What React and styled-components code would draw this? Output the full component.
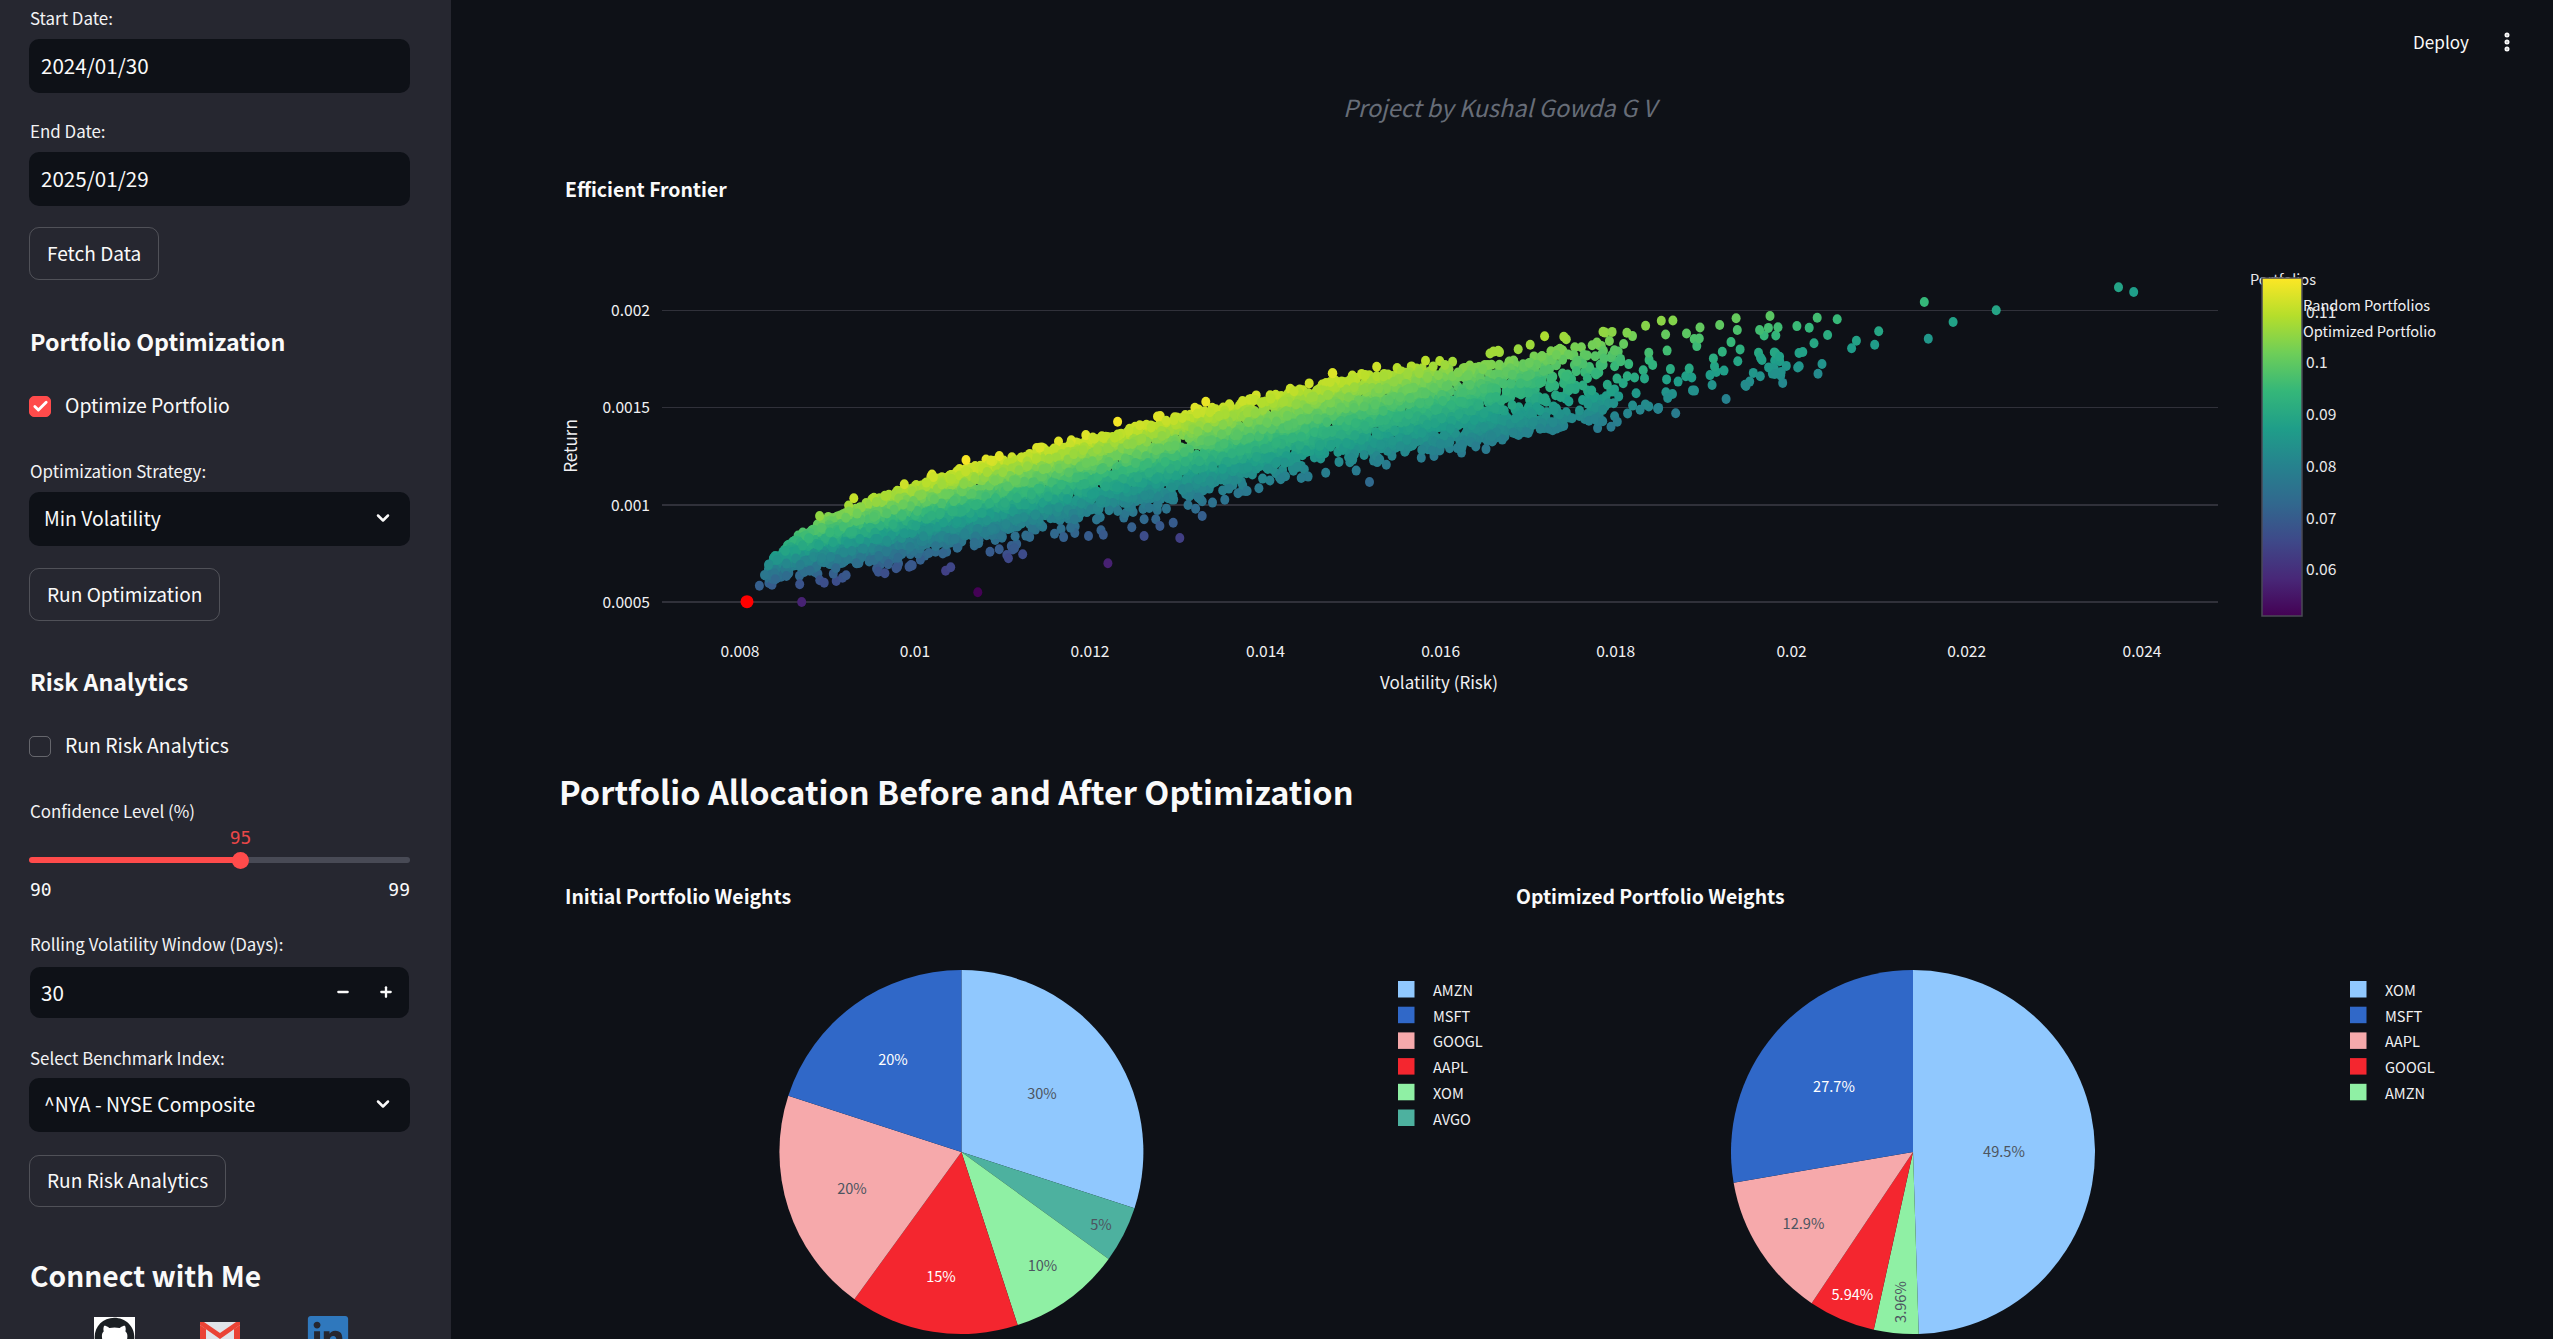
import React, { useMemo } from "react";
import styled, { createGlobalStyle } from "styled-components";
import { ChevronDown, Minus, Plus, Check, EllipsisVertical } from "lucide-react";
import { FaGithub, FaLinkedin } from "react-icons/fa";

const FONT = `"Noto Sans CJK SC", "Noto Sans", sans-serif`;

const Global = createGlobalStyle`
  html, body { margin: 0; height: 100%; overflow: hidden; background: #0e1117; }
  #root { height: 100%; }
  * { box-sizing: border-box; }
`;

const Shell = styled.div`
  display: flex; width: 100%; height: 1339px; overflow: hidden; background: #0e1117;
  color: #fafafa; font-family: ${FONT}; position: relative;
`;
const Sidebar = styled.aside`
  flex: 0 0 451px; height: 100%; overflow: hidden; background: #262730;
  padding: 6px 41px 0 29px; display: flex; flex-direction: column;
`;
const Label = styled.div`
  height: 24px; line-height: 23px; font-size: 16.9px; margin-top: ${p => p.$mt || 0}px; flex: none;
  padding-left: 1px; color: #f3f3f5; white-space: nowrap;
`;
const Field = styled.div`
  height: ${p => p.$h || 54}px; margin-top: ${p => p.$mt ?? 9}px; background: #0e1117; border-radius: 10px;
  display: flex; align-items: center; font-size: 19.4px; line-height: 26px; padding-bottom: 2px; color: #fafafa;
  padding-left: ${p => p.$pl || 12}px; padding-right: ${p => p.$pr || 12}px; justify-content: space-between; flex: none;
`;
const DateValue = styled.span`
  font-size: 20.6px;
`;
const NumberField = styled(Field).attrs({ $h: 51, $mt: 11 })`
  margin-left: 1px; margin-right: 1px; padding-left: 11px; padding-right: 14px;
`;
const ActionButton = styled.div`
  align-self: flex-start; height: ${p => p.$h || 53}px; margin-top: ${p => p.$mt || 21}px; padding: 0 17px 2px;
  border: 1px solid rgba(250,250,250,.2); border-radius: 10px; display: flex; align-items: center;
  font-size: 19.1px; color: #fafafa; white-space: nowrap; flex: none;
`;
const SideHeading = styled.h3`
  margin: ${p => p.$mt}px 0 0; padding-left: 1px; height: 40px; line-height: 39px; flex: none;
  font-size: ${p => p.$size}px; font-weight: 700; color: #fafafa; white-space: nowrap;
`;
const CheckRow = styled.div`
  display: flex; align-items: center; gap: 14px; height: 22px; line-height: 22px; margin-top: 33px; font-size: 19.4px; flex: none;
`;
const CheckLabel = styled.span`
  margin-bottom: 3px;
`;
const CheckBoxMark = styled.span`
  width: 22px; height: 21px; border-radius: 5px; display: flex; align-items: center; justify-content: center; flex: none;
  background: ${p => (p.$on ? "#ff4b4b" : "transparent")};
  border: 1px solid ${p => (p.$on ? "#ff4b4b" : "rgba(250,250,250,.3)")};
`;
const SliderBox = styled.div`
  position: relative; height: 82px; flex: none;
`;
const Track = styled.div`
  position: absolute; left: 0; right: 0; top: 34px; height: 6px; border-radius: 3px;
  background: linear-gradient(to right, #ff4b4b 0 56%, #484a55 56% 100%);
`;
const Thumb = styled.div`
  position: absolute; left: 203px; top: 29px; width: 17px; height: 17px; border-radius: 50%; background: #ff4b4b;
`;
const SliderValue = styled.div`
  position: absolute; left: 200px; top: 4px; width: 23px; text-align: center;
  font: 18px/22px "DejaVu Sans Mono", monospace; color: #ff4b4b; opacity: .9;
`;
const SliderEnds = styled.div`
  position: absolute; left: 1px; right: 0; top: 56px; display: flex; justify-content: space-between;
  font: 18px/22px "DejaVu Sans Mono", monospace; color: #fafafa;
`;
const Steppers = styled.span`
  display: flex; align-items: center; gap: 27px; margin-right: 1px;
`;
const SocialRow = styled.div`
  position: relative; flex: none; height: 60px; margin-top: 22px;
`;
const SocialIcon = styled.a`
  position: absolute; left: ${p => p.$x}px; top: ${p => p.$y}px; width: ${p => p.$w}px; height: 41px; display: block;
  background: ${p => p.$bg || "transparent"}; line-height: 0;
`;

const Main = styled.main`
  flex: 1; min-width: 0; height: 100%; overflow: hidden; position: relative; padding: 0 0 0 108px;
  display: flex; flex-direction: column;
`;
const TopBar = styled.div`
  position: absolute; top: 28px; right: 34px; display: flex; align-items: center; gap: 26px;
  font-size: 17.1px; line-height: 28px; color: #fafafa;
`;
const Subtitle = styled.div`
  height: 40px; margin-top: 87px; width: 1881px; text-align: center; flex: none;
  font-size: 23.6px; line-height: 40px; font-style: italic; color: #676d78;
`;
const ChartTitle = styled.div`
  font-size: 19.4px; font-weight: 700; color: #fafafa; height: 30px; line-height: 28px; padding-left: 6px; flex: none;
`;
const FrontierTitle = styled(ChartTitle)`
  margin-top: 48px;
`;
const ChartSvg = styled.svg`
  display: block; flex: none; font-family: ${FONT};
`;
const FrontierSvg = styled(ChartSvg)`
  margin-top: 25px;
`;
const BigHeading = styled.h2`
  margin: 58px 0 0; height: 50px; line-height: 46px; font-size: 32.5px; font-weight: 700; color: #fafafa; flex: none;
`;
const Columns = styled.div`
  display: flex; margin-top: 64px; flex: none;
`;
const Column = styled.div`
  flex: 0 0 ${p => p.$w}px; display: flex; flex-direction: column;
`;
const PieSvg = styled(ChartSvg)`
  margin-top: 28px;
`;

const VIRIDIS = ["#440154","#482878","#3e4989","#31688e","#26828e","#1f9e89","#35b779","#6ece58","#b5de2b","#fde725"];
const hex = h => [1,3,5].map(i => parseInt(h.slice(i,i+2),16));
function viridis(t) {
  const c = Math.max(0, Math.min(0.9999, t)) * (VIRIDIS.length - 1);
  const i = Math.floor(c), f = c - i, a = hex(VIRIDIS[i]), b = hex(VIRIDIS[i+1]);
  return `rgb(${a.map((v,k) => Math.round(v + (b[k]-v)*f)).join(",")})`;
}
const interp = (pts, x) => {
  if (x <= pts[0][0]) return pts[0][1];
  for (let i = 1; i < pts.length; i++) if (x <= pts[i][0]) {
    const [x0,y0] = pts[i-1], [x1,y1] = pts[i];
    return y0 + (y1-y0)*(x-x0)/(x1-x0);
  }
  return pts[pts.length-1][1];
};
const TOP = [[757,590],[764,570],[775,558],[790,544],[820,525],[854,509],[887,495],[963,470],[1040,452],[1116,432],[1203,411],[1331,383],[1424,368],[1496,356],[1564,342],[1660,324],[1772,319],[1923,306],[2123,291]];
const BOT = [[757,592],[775,578],[795,566],[846,562],[897,556],[999,533],[1101,509],[1203,489],[1336,449],[1380,453],[1500,426],[1620,403],[1780,369],[1940,333],[2123,300]];

const xToVol = x => 0.008 + (x-740)/87600;
const yToRet = y => 0.0005 + (602-y)/194600;
const dotColor = (x,y) => viridis((yToRet(y)/xToVol(x) - 0.0512)/(0.1168-0.0512));

function mulberry(a){ return () => { a |= 0; a = a + 0x6D2B79F5 | 0; let t = Math.imul(a ^ a >>> 15, 1 | a); t = t + Math.imul(t ^ t >>> 7, 61 | t) ^ t; return ((t ^ t >>> 14) >>> 0) / 4294967296; }; }

const Z3 = [[513,1086],[858,1057],[1113,970],[1075,888],[1104,884],[1160,862],[1184,888],[1254,894],[882,935],[900,928],[915,945],[918,955],[930,925],[946,943],[795,992],[805,982],[663,995],[676,1000],[698,985],[727,975],[557,1028],[600,1006],[509,1033],[529,992],[430,1037],[1298,828],[1270,795],[1285,806],[1368,760],[1386,753],[1409,745],[1452,718],[1492,714],[1540,698],[1184,838],[1207,838],[1241,848],[1215,858],[615,775],[548,828],[1305,485],[1553,400],[835,660],[1132,545],[440,1005],[448,975],[465,960],[461,1018],[483,1008],[510,975],[580,985],[620,970]];
const Z4 = [[1024,142],[1043,156],[781,186],[871,211],[817,246],[786,296],[724,274],[696,302],[690,325],[719,314],[672,238],[647,233],[637,263],[660,285],[643,310],[629,336],[653,372],[648,401],[588,228],[598,262],[575,270],[452,242],[379,275],[409,278],[306,289],[533,477],[558,438],[470,520],[448,507],[397,545],[389,560],[87,726],[466,462],[460,474],[594,402],[600,350],[578,360],[525,255],[547,270],[330,290],[288,314],[273,328],[248,332],[41,400],[96,380],[157,362]];

function accept(x) {
  if (x < 800) return 0.25 + 0.75*(x-768)/32;
  if (x < 1430) return 1;
  if (x < 1640) return 1 - 0.93*(x-1430)/210;
  if (x < 1800) return 0.05;
  return 0;
}

function makeDots() {
  const r = mulberry(20250129), out = [];
  for (let i = 0; i < 7600; i++) {
    const x = 768 + 1080*Math.pow(r(), 1.15);
    if (r() > accept(x)) continue;
    const b = interp(BOT,x), tp = interp(TOP,x);
    let y = b + (tp-b)*Math.pow(r(), 0.9);
    const roll = r();
    if (roll < 0.04) y = b + Math.min(20, -Math.log(r()+0.01)*6);
    else if (roll < 0.055) y = tp - r()*5;
    else if (x > 1430) y = b + 14 + (tp-b-8)*r();
    out.push([x, y + (r()-.5)*3]);
  }
  Z3.forEach(([a,c]) => out.push([540+a/1.96, 240+c/3]));
  Z4.forEach(([a,c]) => out.push([1300+a/1.251, 240+c/3]));
  return out;
}

const PALETTE = { blue:"#90c8fe", navy:"#3068c8", pink:"#f6a9ab", red:"#f4262f", green:"#8ff0a4", teal:"#4db19f" };

const slicePath = (cx, cy, r, a0, a1) => {
  const p = a => [cx + r*Math.sin(a*2*Math.PI), cy - r*Math.cos(a*2*Math.PI)];
  const [x0,y0] = p(a0), [x1,y1] = p(a1);
  return `M${cx} ${cy}L${x0} ${y0}A${r} ${r} 0 ${a1-a0>0.5?1:0} 1 ${x1} ${y1}Z`;
};

function Frontier() {
  const dots = useMemo(makeDots, []);
  const gridY = [[310.5,1],[407.5,1],[505,2],[602,2]];
  const yTicks = [["0.002",310],["0.0015",407],["0.001",505],["0.0005",602]];
  const xTicks = [["0.008",740],["0.01",915],["0.012",1090],["0.014",1265.5],["0.016",1440.7],["0.018",1615.7],["0.02",1791.6],["0.022",1966.7],["0.024",2142]];
  const barTicks = [["0.11",312.7],["0.1",363],["0.09",414.7],["0.08",467],["0.07",519],["0.06",570]];
  return (
    <FrontierSvg width={1900} height={480} viewBox="559 230 1900 480">
      <defs>
        <linearGradient id="vir" x1="0" y1="1" x2="0" y2="0">
          {VIRIDIS.map((c,i) => <stop key={c} offset={i/9} stopColor={c} />)}
        </linearGradient>
      </defs>
      {gridY.map(([y,w]) => <line key={y} x1={662} x2={2218} y1={y} y2={y} stroke="#30313a" strokeWidth={w} />)}
      {yTicks.map(([t,y]) => <text key={t} x={650} y={y+6} textAnchor="end" fontSize={15.6} fill="#f0f0f2">{t}</text>)}
      {xTicks.map(([t,x]) => <text key={t} x={x} y={657} textAnchor="middle" fontSize={15.6} fill="#f0f0f2">{t}</text>)}
      <text x={1439} y={689} textAnchor="middle" fontSize={17} fill="#f0f0f2">Volatility (Risk)</text>
      <text transform="translate(577 446) rotate(-90)" textAnchor="middle" fontSize={17} fill="#f0f0f2">Return</text>
      {dots.map(([x,y],i) => <ellipse key={i} cx={x.toFixed(1)} cy={y.toFixed(1)} rx={4.5} ry={5} fill={dotColor(x,y)} />)}
      <circle cx={747} cy={601.7} r={6.5} fill="#ff0000" />
      <text x={2283} y={285} textAnchor="middle" fontSize={14.6} fill="#e8e8ea">Portfolios</text>
      <rect x={2262} y={278} width={40} height={338} fill="url(#vir)" stroke="#4a4a55" strokeWidth={1.5} />
      {barTicks.map(([t,y]) => <text key={t} x={2306} y={y+5} fontSize={15.6} fill="#e8e8ea">{t}</text>)}
      <text x={2303} y={311} fontSize={14.6} fill="#f0f0f2">Random Portfolios</text>
      <text x={2303} y={337} fontSize={14.6} fill="#f0f0f2">Optimized Portfolio</text>
    </FrontierSvg>
  );
}

function Pie({ originX, width, cx, legendX, slices, legend }) {
  let acc = 0;
  return (
    <PieSvg width={width} height={410} viewBox={`${originX} 940 ${width} 410`}>
      {slices.map(s => { const a = acc; acc += s.v; return <path key={s.c} d={slicePath(cx,1152,182,a,acc)} fill={s.c} />; })}
      {slices.map(s => (
        <text key={s.c} x={s.x} y={s.rot ? s.y : s.y-1.5} textAnchor="middle" dominantBaseline="central" fontSize={14.6} fill={s.w ? "#ffffff" : "#4d5560"}
          transform={s.rot ? `rotate(${s.rot} ${s.x} ${s.y})` : undefined}>{s.t}</text>
      ))}
      {legend.map(([n,c],i) => (
        <g key={n}>
          <rect x={legendX} y={981+i*25.7} width={16.5} height={16.5} fill={c} />
          <text x={legendX+35} y={996+i*25.7} fontSize={14.6} fill="#f0f0f2">{n}</text>
        </g>
      ))}
    </PieSvg>
  );
}

const GmailMark = () => (
  <svg width="40" height="30" viewBox="0 0 40 30">
    <rect x="0" y="0" width="40" height="30" rx="2.5" fill="#dfe3e8" />
    <path d="M0 3 L20 17 L40 3 V0 H36 L20 11 L4 0 H0Z" fill="#ea4335" />
    <path d="M0 3 L6 7 V30 H0Z M40 3 L34 7 V30 H40Z" fill="#ea4335" />
  </svg>
);

const pie1 = [
  { c:PALETTE.blue, v:.30, t:"30%", x:1042, y:1094 },
  { c:PALETTE.teal, v:.05, t:"5%", x:1101, y:1225 },
  { c:PALETTE.green, v:.10, t:"10%", x:1042.5, y:1266 },
  { c:PALETTE.red, v:.15, t:"15%", x:941, y:1277, w:true },
  { c:PALETTE.pink, v:.20, t:"20%", x:852, y:1189 },
  { c:PALETTE.navy, v:.20, t:"20%", x:893, y:1060, w:true },
];
const pie2 = [
  { c:PALETTE.blue, v:.495, t:"49.5%", x:2004, y:1152 },
  { c:PALETTE.green, v:.0396, t:"3.96%", x:1899.4, y:1302, rot:-90 },
  { c:PALETTE.red, v:.0594, t:"5.94%", x:1852.4, y:1295, w:true },
  { c:PALETTE.pink, v:.129, t:"12.9%", x:1803.5, y:1224 },
  { c:PALETTE.navy, v:.277, t:"27.7%", x:1834, y:1087, w:true },
];
const legend1 = [["AMZN",PALETTE.blue],["MSFT",PALETTE.navy],["GOOGL",PALETTE.pink],["AAPL",PALETTE.red],["XOM",PALETTE.green],["AVGO",PALETTE.teal]];
const legend2 = [["XOM",PALETTE.blue],["MSFT",PALETTE.navy],["AAPL",PALETTE.pink],["GOOGL",PALETTE.red],["AMZN",PALETTE.green]];

export default function App() {
  return (
    <Shell>
      <Global />
      <Sidebar>
        <Label>Start Date:</Label>
        <Field><DateValue>2024/01/30</DateValue></Field>
        <Label $mt={26}>End Date:</Label>
        <Field><DateValue>2025/01/29</DateValue></Field>
        <ActionButton>Fetch Data</ActionButton>
        <SideHeading $mt={42} $size={23.2}>Portfolio Optimization</SideHeading>
        <CheckRow><CheckBoxMark $on><Check size={17} color="#fff" strokeWidth={4} /></CheckBoxMark><CheckLabel>Optimize Portfolio</CheckLabel></CheckRow>
        <Label $mt={42}>Optimization Strategy:</Label>
        <Field $pl={15} $pr={17}>Min Volatility<ChevronDown size={20} strokeWidth={3} /></Field>
        <ActionButton $mt={22}>Run Optimization</ActionButton>
        <SideHeading $mt={41} $size={23.2}>Risk Analytics</SideHeading>
        <CheckRow><CheckBoxMark /><CheckLabel>Run Risk Analytics</CheckLabel></CheckRow>
        <Label $mt={42}>Confidence Level (%)</Label>
        <SliderBox>
          <SliderValue>95</SliderValue>
          <Track />
          <Thumb />
          <SliderEnds><span>90</span><span>99</span></SliderEnds>
        </SliderBox>
        <Label $mt={27}>Rolling Volatility Window (Days):</Label>
        <NumberField><DateValue>30</DateValue><Steppers><Minus size={16} strokeWidth={3.5} /><Plus size={16} strokeWidth={3.5} /></Steppers></NumberField>
        <Label $mt={28}>Select Benchmark Index:</Label>
        <Field $mt={8} $pl={15} $pr={17}>^NYA - NYSE Composite<ChevronDown size={20} strokeWidth={3} /></Field>
        <ActionButton $mt={23} $h={52}>Run Risk Analytics</ActionButton>
        <SideHeading $mt={48} $size={28.2}>Connect with Me</SideHeading>
        <SocialRow>
          <SocialIcon $x={65} $y={0} $w={41} $bg="#ffffff"><FaGithub size={41} color="#1b1f23" /></SocialIcon>
          <SocialIcon $x={171} $y={5} $w={40}><GmailMark /></SocialIcon>
          <SocialIcon $x={276} $y={-4} $w={40}><FaLinkedin size={46} color="#2f78bd" /></SocialIcon>
        </SocialRow>
      </Sidebar>
      <Main>
        <TopBar><span>Deploy</span><EllipsisVertical size={24} strokeWidth={3} /></TopBar>
        <Subtitle>Project by Kushal Gowda G V</Subtitle>
        <FrontierTitle>Efficient Frontier</FrontierTitle>
        <Frontier />
        <BigHeading>Portfolio Allocation Before and After Optimization</BigHeading>
        <Columns>
          <Column $w={951}>
            <ChartTitle>Initial Portfolio Weights</ChartTitle>
            <Pie originX={559} width={951} cx={961.4} legendX={1398} slices={pie1} legend={legend1} />
          </Column>
          <Column $w={980}>
            <ChartTitle>Optimized Portfolio Weights</ChartTitle>
            <Pie originX={1510} width={980} cx={1913} legendX={2350} slices={pie2} legend={legend2} />
          </Column>
        </Columns>
      </Main>
    </Shell>
  );
}
